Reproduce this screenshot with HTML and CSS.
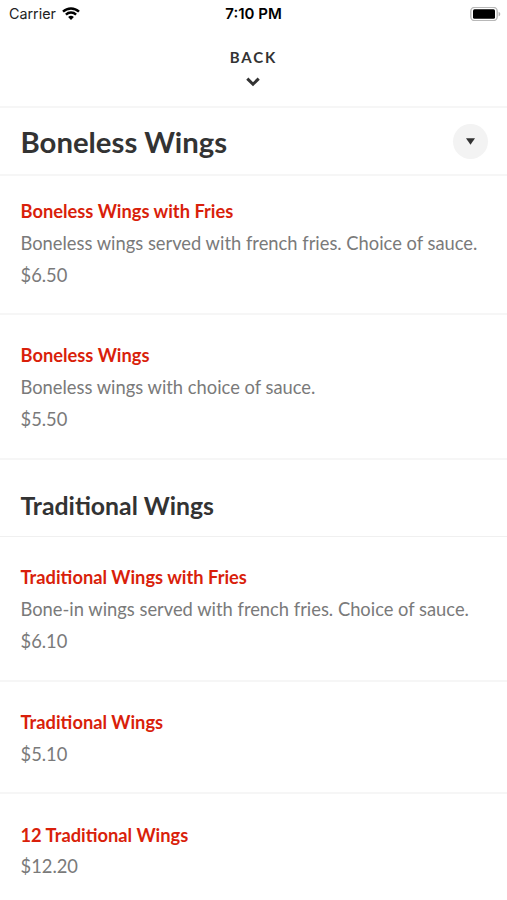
FILE: index.html
```html
<!DOCTYPE html>
<html lang="en">
<head>
  <meta charset="UTF-8">
  <meta name="viewport" content="width=device-width, initial-scale=1.0">
  <title>Menu</title>

  <link rel="stylesheet" href="styles.css">
</head>
<body>
  <div class="status-bar">
    <div class="carrier">
      <span>Carrier</span>
      <svg class="wifi" viewBox="0 0 18 13" width="18" height="13">
        <path d="M1 4.7a11.6 11.6 0 0 1 16 0M3.9 7.6a7.4 7.4 0 0 1 10.2 0" fill="none" stroke="#000" stroke-width="2.4"/>
        <path d="M9 13L6.1 10.1a4.2 4.2 0 0 1 5.8 0z"/>
      </svg>
    </div>
    <div class="time">7:10 PM</div>
    <div class="battery">
      <svg viewBox="0 0 31 14" width="31" height="14">
        <rect x="0.8" y="0.3" width="26.4" height="13.4" rx="4" fill="#fff" stroke="#b8b8b8" stroke-width="1.4"/>
        <rect x="3" y="2.3" width="22" height="9.4" rx="1.5"/>
        <path d="M28.6 4.7c2.2 .8 2.2 3.8 0 4.6z" fill="#b0b0b0"/>
      </svg>
    </div>
  </div>

  <header class="back">
    <span class="back-label">BACK</span>
    <svg class="chevron" viewBox="0 0 14 10" width="14" height="10">
      <path d="M1.3 1.6L7 7.2l5.7-5.6" fill="none" stroke="#333" stroke-width="3"/>
    </svg>
  </header>

  <div class="category">
    <h1>Boneless Wings</h1>
    <button class="toggle" aria-label="Categories">
      <svg viewBox="0 0 9 7" width="9" height="7"><path d="M0 0.2h9L4.5 6.8z" fill="#333"/></svg>
    </button>
  </div>

  <ul class="items boneless">
    <li class="item">
      <h3>Boneless Wings with Fries</h3>
      <p>Boneless wings served with french fries. Choice of sauce.</p>
      <p>$6.50</p>
    </li>
    <li class="item">
      <h3>Boneless Wings</h3>
      <p>Boneless wings with choice of sauce.</p>
      <p>$5.50</p>
    </li>
  </ul>

  <h2 class="section-title">Traditional Wings</h2>

  <ul class="items">
    <li class="item">
      <h3>Traditional Wings with Fries</h3>
      <p>Bone-in wings served with french fries. Choice of sauce.</p>
      <p>$6.10</p>
    </li>
    <li class="item">
      <h3>Traditional Wings</h3>
      <p>$5.10</p>
    </li>
    <li class="item">
      <h3>12 Traditional Wings</h3>
      <p>$12.20</p>
    </li>
  </ul>
</body>
</html>
```

FILE: styles.css
```css
* {
  box-sizing: border-box;
}

body {
  margin: 0;
  height: 900px;
  overflow: hidden;
  background: #fff;
  font-family: Lato, sans-serif;
  font-size: 18.33px;
  color: #333;
}

h1, h2, h3, p, ul {
  margin: 0;
  padding: 0;
}

.status-bar {
  display: grid;
  grid-template-columns: 1fr auto 1fr;
  align-items: center;
  height: 27px;
  padding: 0 6px 0 9px;
  font-family: Inter, sans-serif;
  font-size: 14.3px;
  color: #000;
}

.carrier {
  display: flex;
  align-items: center;
  gap: 6px;
  color: #222;
}

.time {
  margin-left: -3px;
  font-size: 15px;
  font-weight: 600;
}

.battery {
  display: flex;
  justify-content: flex-end;
}

.back {
  display: flex;
  flex-direction: column;
  align-items: center;
  height: 81px;
  padding: 20px 1px 0 0;
  border-bottom: 2px solid #f6f6f6;
}

.back-label {
  font-size: 15px;
  font-weight: 700;
  line-height: 20px;
  letter-spacing: 1.9px;
  margin-right: -1px;
}

.chevron {
  margin-top: 10px;
}

.category {
  display: flex;
  align-items: center;
  justify-content: space-between;
  height: 68px;
  padding: 0 19px 0 20.5px;
  border-bottom: 2px solid #f6f6f6;
}

h1 {
  font-size: 29.3px;
  font-weight: 700;
}

.toggle {
  display: flex;
  align-items: center;
  justify-content: center;
  width: 35px;
  height: 35px;
  padding: 0;
  border: 0;
  border-radius: 50%;
  background: #f3f3f3;
}

.items {
  list-style: none;
}

.item {
  padding: 25.2px 20.5px 21.9px;
  border-bottom: 2px solid #f6f6f6;
  line-height: 31.8px;
}

.boneless .item:first-child {
  padding-top: 20px;
}

.item h3 {
  font-size: 18.3px;
  font-weight: 700;
  color: #d91f0b;
}

.item p {
  color: #7a7a7a;
}

.section-title {
  height: 77.5px;
  padding: 30px 20.5px 0;
  border-bottom: 1px solid #f0f0f0;
  font-size: 24.8px;
  font-weight: 700;
  line-height: 32px;
}
```
